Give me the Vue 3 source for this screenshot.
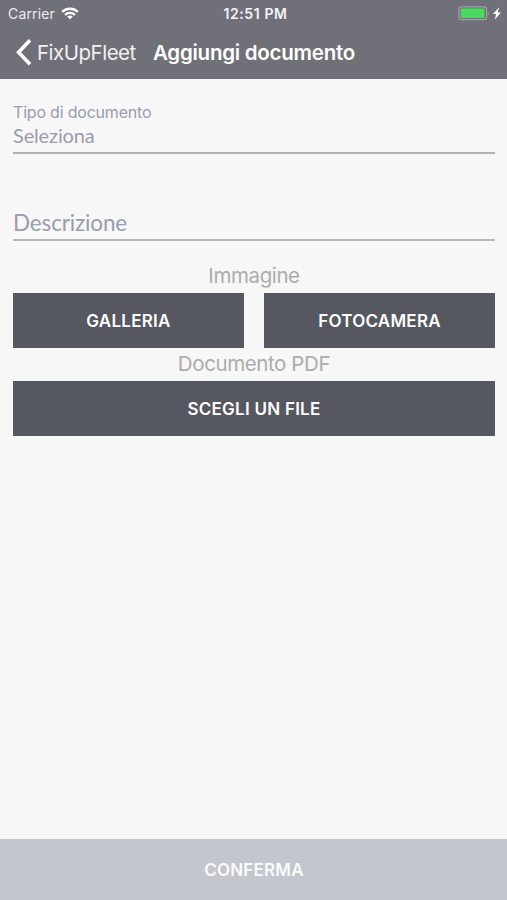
<script setup>
import { ref } from 'vue'

const documentType = ref('Seleziona')
</script>

<template>
  <main class="screen">
    <header class="header">
      <div class="status">
        <div class="network">
          <span class="carrier">Carrier</span>
          <svg class="wifi" width="18" height="13" viewBox="0 0 18 13" fill="none" stroke="currentColor" stroke-width="2.3">
            <path d="M1.2 4.8C5.5 .7 12.5 .7 16.8 4.8" />
            <path d="M4 7.8C6.8 5.2 11.2 5.2 14 7.8" />
            <path d="M6.2 9.6Q9 7.4 11.8 9.6L9 12.5Z" fill="currentColor" stroke="none" />
          </svg>
        </div>
        <span class="time">12:51 PM</span>
        <svg class="battery" width="44" height="15" viewBox="0 0 44 15">
          <rect x=".8" y=".8" width="27.8" height="12.9" rx="2.7" fill="none" stroke="#a0a1a8" stroke-width="1.2" />
          <rect x="2.6" y="2.6" width="24" height="9.3" rx=".7" fill="#4cd95f" />
          <path d="M29.8 4.9Q31.8 7.2 29.8 9.5Z" fill="#a0a1a8" />
          <path d="M41.2 1.2L34.9 8.1H38.2L36.7 13.8L43 6.6H39.6Z" fill="#fff" />
        </svg>
      </div>
      <nav class="nav">
        <svg class="chevron" width="17" height="28" viewBox="0 0 17 28">
          <path d="M15 2.2L3.6 14.2L15 26.2" fill="none" stroke="#fff" stroke-width="3.6" />
        </svg>
        <span class="back">FixUpFleet</span>
        <h1 class="title">Aggiungi documento</h1>
      </nav>
    </header>

    <form class="form" @submit.prevent>
      <div class="field type-field">
        <span class="label">Tipo di documento</span>
        <span class="value">{{ documentType }}</span>
      </div>
      <div class="field description-field">
        <span class="placeholder">Descrizione</span>
      </div>
      <h2 class="section">Immagine</h2>
      <div class="row">
        <button class="button">GALLERIA</button>
        <button class="button">FOTOCAMERA</button>
      </div>
      <h2 class="section pdf">Documento PDF</h2>
      <div class="row">
        <button class="button">SCEGLI UN FILE</button>
      </div>
    </form>

    <button class="confirm">CONFERMA</button>
  </main>
</template>

<style>
body {
  background: #f7f7f7;
}
</style>

<style scoped>
.screen {
  display: flex;
  flex-direction: column;
  height: 900px;
  overflow: hidden;
  background: #f7f7f7;
  font-family: Inter, sans-serif;
  white-space: nowrap;
}
.header {
  height: 79px;
  flex: none;
  background: #707078;
  color: #fff;
}
.status {
  display: grid;
  grid-template-columns: 1fr auto 1fr;
  align-items: center;
  height: 27px;
  padding: 0 5px 0 8px;
}
.network {
  display: flex;
  align-items: center;
  gap: 6px;
}
.carrier {
  font-size: 14px;
  letter-spacing: 0.15px;
  color: #ececef;
}
.time {
  padding-left: 1px;
  font-size: 14px;
  font-weight: 600;
  letter-spacing: 0.6px;
  color: #f4f4f6;
}
.battery {
  justify-self: end;
}
.nav {
  display: flex;
  align-items: center;
  height: 50px;
  padding-left: 15px;
}
.back {
  width: 116px;
  padding: 2px 0 0 5px;
  box-sizing: border-box;
  font-size: 20.5px;
  line-height: 26px;
  letter-spacing: -0.5px;
  color: #f0f0f2;
}
.title {
  margin: 0;
  padding: 2px 0 0 5px;
  font-size: 20.5px;
  line-height: 26px;
  letter-spacing: -0.25px;
  font-weight: 600;
}
.form {
  flex: 1;
  padding: 24px 12px 0 13px;
}
.field {
  display: flex;
  flex-direction: column;
  box-sizing: border-box;
  border-bottom: 2px solid #b0b2c0;
  color: #9a9cab;
}
.type-field {
  height: 51px;
}
.description-field {
  height: 87px;
  justify-content: flex-end;
  border-bottom-color: #b6b7bf;
}
.label {
  margin-top: -1px;
  font-size: 16px;
  line-height: 20px;
  letter-spacing: -0.2px;
}
.value {
  font-family: Lato, sans-serif;
  font-size: 20px;
  line-height: 26px;
  letter-spacing: -0.15px;
}
.placeholder {
  font-family: Lato, sans-serif;
  font-size: 22.5px;
  line-height: 32px;
  letter-spacing: -0.15px;
}
.section {
  margin: 0;
  padding-top: 18px;
  font-size: 20.5px;
  line-height: 34px;
  height: 34px;
  font-weight: 400;
  letter-spacing: -0.4px;
  text-align: center;
  color: #acacac;
}
.pdf {
  padding: 0;
  height: 33px;
  line-height: 32px;
}
.row {
  display: flex;
  gap: 20px;
}
.button {
  flex: 1;
  height: 55px;
  padding: 0;
  border: 0;
  background: #555860;
  color: #fff;
  font: 600 17px Inter, sans-serif;
  letter-spacing: 0.25px;
}
.confirm {
  flex: none;
  height: 61px;
  padding: 0 0 0 1px;
  border: 0;
  background: #c3c6cd;
  color: #fafbfd;
  font: 600 17px Inter, sans-serif;
  letter-spacing: 0.2px;
}
</style>
